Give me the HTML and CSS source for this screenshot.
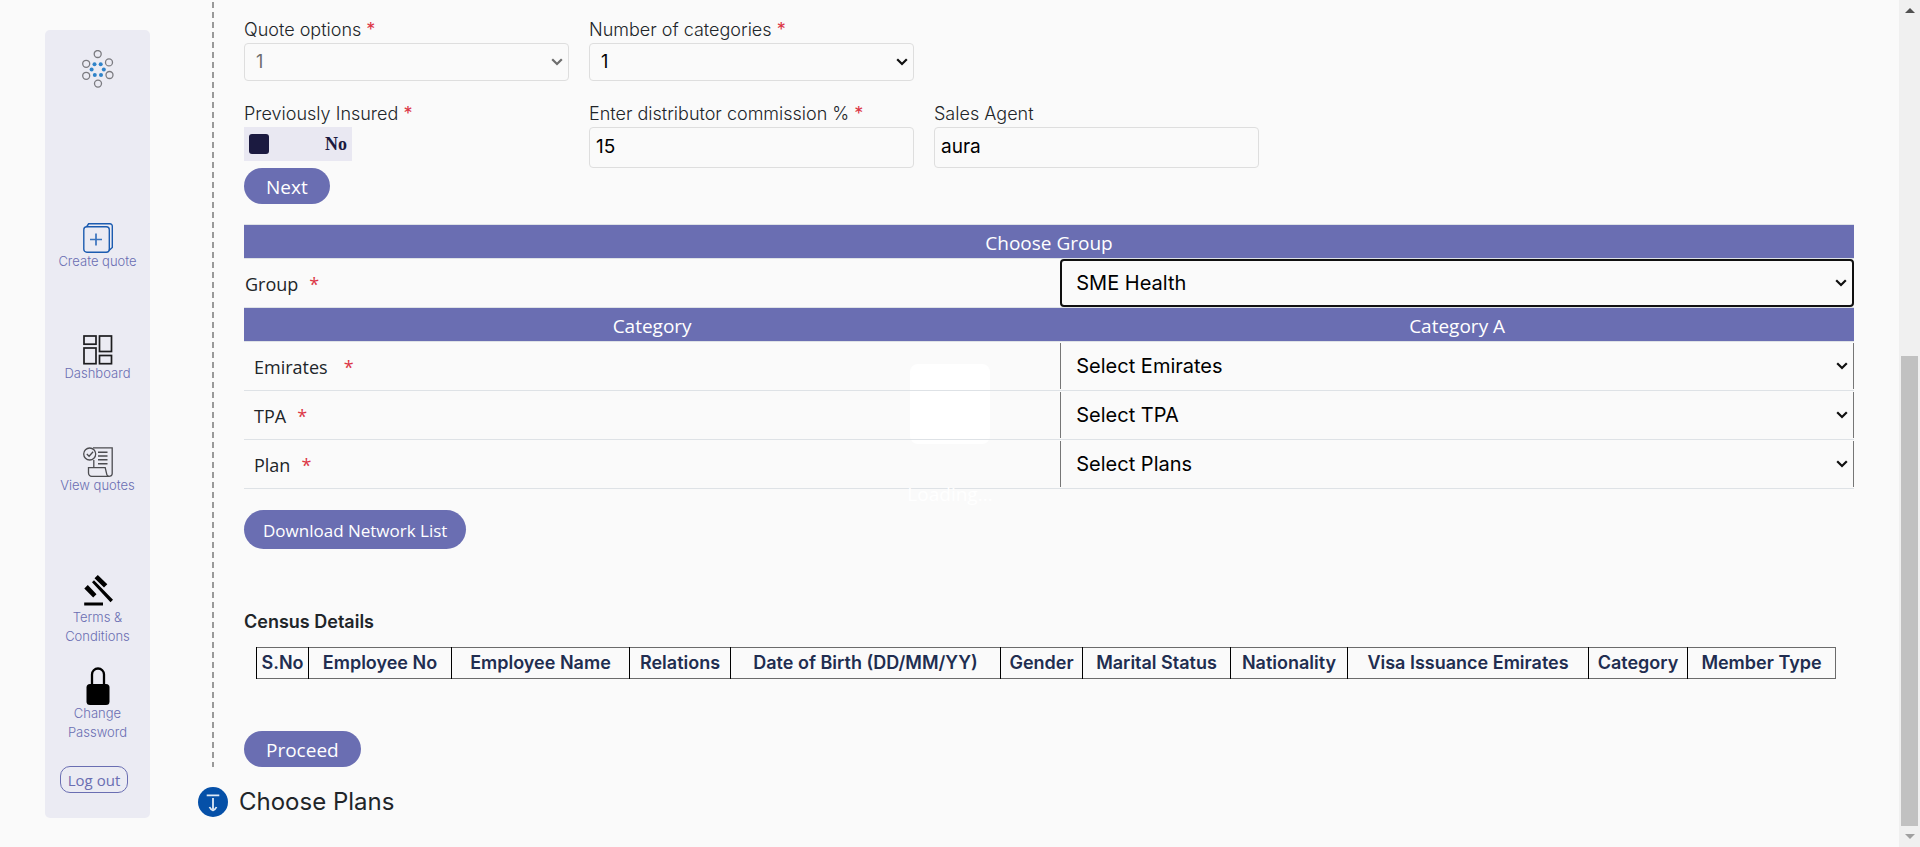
FILE: index.html
```html
<!DOCTYPE html>
<html lang="en">
<head>
<meta charset="utf-8">
<title>Create quote</title>
<link rel="stylesheet" href="styles.css">
</head>
<body>
<div class="app">
  <nav class="sidebar" aria-label="Main">
    <svg class="logo" viewBox="0 0 32 38" width="32" height="38" aria-hidden="true">
      <g fill="none" stroke="#7b7b80" stroke-width="1.3">
        <circle cx="15.7" cy="4" r="3.5"/><circle cx="27" cy="12.4" r="3.5"/><circle cx="27.5" cy="25" r="3.5"/>
        <circle cx="16" cy="33.6" r="3.5"/><circle cx="4.2" cy="25.8" r="3.5"/><circle cx="4.2" cy="13.8" r="3.5"/>
      </g>
      <g fill="#2f83c9">
        <circle cx="12.5" cy="14.3" r="2"/><circle cx="18.7" cy="14.3" r="2"/><circle cx="21.8" cy="19.6" r="2"/>
        <circle cx="19" cy="25" r="2"/><circle cx="12.8" cy="25" r="2"/><circle cx="9.6" cy="19.6" r="2"/>
      </g>
    </svg>
    <a class="nav-item nav-create" href="#">
      <svg viewBox="0 0 30 30" width="30" height="30" aria-hidden="true">
        <g fill="none" stroke="#1c5cb0" stroke-width="1.4">
          <path d="M3.500 4 5.600 .8H27a2.300 2.300 0 0 1 2.300 2.300V24.500L26 27.500"/>
          <rect x=".8" y="3.700" width="25.500" height="25.500" rx="3"/>
        </g>
        <path d="M13 10.500v12M7 16.500h12" stroke="#3a73bd" stroke-width="1.700" fill="none"/>
      </svg>
      <span>Create quote</span>
    </a>
    <a class="nav-item nav-dashboard" href="#">
      <svg viewBox="0 0 30 30" width="30" height="30" aria-hidden="true">
        <g fill="none" stroke="#1d1d1f" stroke-width="1.700">
          <rect x="1" y="1" width="12" height="8.200"/><rect x="16.500" y="1" width="12" height="15.500"/>
          <rect x="1" y="13" width="12" height="15.700"/><rect x="16.500" y="20.500" width="12" height="8.200"/>
        </g>
      </svg>
      <span>Dashboard</span>
    </a>
    <a class="nav-item nav-quotes" href="#">
      <svg viewBox="0 0 30 30" width="30" height="30" aria-hidden="true">
        <g fill="none" stroke="#4c4c50" stroke-width="1.300">
          <path d="M10 .9H29.200V26.500a2.800 2.800 0 0 1-5.400 1L22.200 20.600H5.500V26a3.200 3.200 0 0 0 3.200 3.300H26.500"/>
          <path d="M10.800 13v7.500"/><circle cx="6.700" cy="7" r="6"/><path d="M3.800 7l2.300 2.200 4-4.400"/>
          <path d="M15 5.300h9.500M15 9h9.500M15 12.800h9.500M15 16.700h9.500" stroke-width="1.500"/>
        </g>
      </svg>
      <span>View quotes</span>
    </a>
    <a class="nav-item nav-terms" href="#">
      <svg viewBox="0 0 30 32" width="30" height="32" aria-hidden="true">
        <path d="M1.200 28.500h18.800v3H1.200zM9 8.300l2-2 19 19.500-2.500 2.500zM11.500 4.300 14.800 1 24.300 10.200 21 13.500zM1.300 14.500l3.500-3.500 8.700 9.200-3.300 3.300z"/>
      </svg>
      <span>Terms &amp; Conditions</span>
    </a>
    <a class="nav-item nav-password" href="#">
      <svg viewBox="0 0 24 38" width="24" height="38" aria-hidden="true">
        <path d="M6 18V7.500a6 6 0 0 1 12 0V18" fill="none" stroke="#000" stroke-width="2.300"/>
        <rect x=".5" y="17" width="23" height="21" rx="3.500"/>
      </svg>
      <span>Change Password</span>
    </a>
    <button class="logout" type="button">Log out</button>
  </nav>

  <main class="content">
    <section class="step">
      <form class="quote-form">
        <div class="fields">
          <div class="field">
            <label for="options">Quote options <b class="req">*</b></label>
            <select id="options" disabled><option>1</option></select>
          </div>
          <div class="field">
            <label for="categories">Number of categories <b class="req">*</b></label>
            <select id="categories"><option>1</option></select>
          </div>
        </div>
        <div class="fields">
          <div class="field">
            <label for="insured">Previously Insured <b class="req">*</b></label>
            <div class="toggle"><input type="checkbox" id="insured"><span>No</span></div>
            <button class="pill" type="button">Next</button>
          </div>
          <div class="field">
            <label for="commission">Enter distributor commission % <b class="req">*</b></label>
            <input class="text" id="commission" type="text" value="15">
          </div>
          <div class="field">
            <label for="agent">Sales Agent</label>
            <input class="text" id="agent" type="text" value="aura">
          </div>
        </div>

        <table class="plans">
          <colgroup><col class="names"><col></colgroup>
          <thead><tr><th colspan="2">Choose Group</th></tr></thead>
          <tbody>
            <tr class="group"><td><label for="group">Group</label><b class="req">*</b></td>
              <td><select id="group"><option>SME Health</option></select></td></tr>
            <tr><th>Category</th><th>Category A</th></tr>
            <tr><td><label for="emirates">Emirates</label><b class="req wide">*</b></td>
              <td><select id="emirates"><option>Select Emirates</option></select></td></tr>
            <tr><td><label for="tpa">TPA</label><b class="req">*</b></td>
              <td><select id="tpa"><option>Select TPA</option></select></td></tr>
            <tr><td><label for="plan">Plan</label><b class="req">*</b></td>
              <td><select id="plan"><option>Select Plans</option></select></td></tr>
          </tbody>
        </table>
        <button class="pill download" type="button">Download Network List</button>

        <h2 class="census-title">Census Details</h2>
        <table class="census">
          <colgroup><col class="w52"><col class="w143"><col class="w178"><col class="w101"><col class="w270"><col class="w82"><col class="w148"><col class="w117"><col class="w241"><col class="w99"><col class="w148"></colgroup>
          <thead><tr>
            <th>S.No</th><th>Employee No</th><th>Employee Name</th><th>Relations</th><th>Date of Birth (DD/MM/YY)</th><th>Gender</th><th>Marital Status</th><th>Nationality</th><th>Visa Issuance Emirates</th><th>Category</th><th>Member Type</th>
          </tr></thead>
        </table>
        <button class="pill proceed" type="button">Proceed</button>
      </form>
    </section>
    <div class="next-step">
      <svg viewBox="0 0 30 30" width="30" height="30" aria-hidden="true">
        <circle cx="15" cy="15" r="15" fill="#0550a8"/>
        <path d="M8.700 8.300h12.600M15 11v11M11.500 20c.8 1.800 2 2.900 3.500 3.300 1.500-.4 2.700-1.500 3.500-3.300" fill="none" stroke="#dfe9f6" stroke-width="1.800"/>
      </svg>
      <h2>Choose Plans</h2>
    </div>
  </main>

  <div class="scrollbar" aria-hidden="true">
    <i class="arrow up"></i><i class="track"></i><i class="thumb"></i><i class="arrow down"></i>
  </div>
  <div class="loader" role="status"><i></i><span>Loading...</span></div>
</div>
</body>
</html>
```
FILE: styles.css
```css
* { box-sizing: border-box; }
body {
  margin: 0;
  background: #fafafa;
  color: #212529;
  font: 18px/24px "Open Sans", sans-serif;
}
.app { display: flex; min-height: 100vh; overflow: hidden; }

.sidebar {
  flex: 0 0 105px;
  align-self: flex-start;
  display: flex;
  flex-direction: column;
  align-items: center;
  margin: 30px 0 0 45px;
  padding: 20px 0 25px;
  border-radius: 5px;
  background: #ebebf3;
}
.nav-item {
  display: flex;
  flex-direction: column;
  align-items: center;
  width: 90px;
  color: #6a6eb2;
  font: 300 13px/19px Inter, sans-serif;
  text-align: center;
  text-decoration: none;
}
.nav-item svg { margin-bottom: -1px; }
.nav-create { margin-top: 135px; }
.nav-dashboard, .nav-quotes { margin-top: 64px; }
.nav-terms { margin-top: 79px; }
.nav-terms svg { margin-bottom: 2px; }
.nav-password { margin-top: 21px; }
.logout {
  align-self: flex-start;
  width: 68px;
  height: 27px;
  margin: 24px 0 0 15px;
  padding: 0;
  border: 1px solid #6a6eb2;
  border-radius: 10px;
  background: none;
  color: #6a6eb2;
  font: 15px/24px "Open Sans", sans-serif;
}

.content { flex: 1; min-width: 0; padding: 2px 45px 0 48px; }
.step {
  padding: 16px 0 0 46px;
  background: repeating-linear-gradient(#999 0 6px, transparent 6px 10px) 14px 0 / 2px 100% no-repeat;
}
.fields {
  display: grid;
  grid-template-columns: repeat(auto-fit, 325px);
  gap: 20px;
}
.field { display: flex; flex-direction: column; align-items: flex-start; }
.fields + .fields { margin-top: 21px; }
.field label { height: 25px; font: 300 18px/24px Inter, sans-serif; color: #212529; white-space: nowrap; }
.req { color: #dc3545; font-weight: 400; }
select, .text {
  width: 100%;
  border: 1px solid #dedede;
  border-radius: 4px;
  background: #fafafa;
  color: #000;
  font: 18px/24px Inter, sans-serif;
}
select {
  appearance: none;
  background: #fafafa url("data:image/svg+xml,%3Csvg xmlns='http://www.w3.org/2000/svg' width='12' height='8'%3E%3Cpath d='M1.200 1.200 6 6l4.800-4.800' fill='none' stroke='%23101010' stroke-width='2.200'/%3E%3C/svg%3E") right 5px center no-repeat;
}
.field select { height: 38px; padding: 0 11px; }
select:disabled {
  color: #6d6d6d;
  opacity: 1;
  background-image: url("data:image/svg+xml,%3Csvg xmlns='http://www.w3.org/2000/svg' width='12' height='8'%3E%3Cpath d='M1.200 1.200 6 6l4.800-4.800' fill='none' stroke='%236d6d6d' stroke-width='2.200'/%3E%3C/svg%3E");
}
.text { height: 41px; padding: 0 6px 2px; font-size: 19px; }
.toggle {
  display: flex;
  align-items: center;
  justify-content: space-between;
  width: 108px;
  height: 34px;
  padding: 0 5px;
  background: #e9e8f2;
  color: #1b1a40;
  font: bold 18px/24px "Liberation Serif", serif;
}
.toggle input {
  appearance: none;
  width: 20px;
  height: 20px;
  margin: 0;
  border-radius: 3px;
  background: #1b1a40;
}
.pill {
  display: block;
  height: 36px;
  padding: 2px 22px 0;
  border: 0;
  border-radius: 20px;
  background: #6a6eb2;
  color: #fff;
  font: 19px/34px "Open Sans", sans-serif;
}
.field .pill { margin-top: 7px; }

.plans {
  width: 100%;
  margin-top: 20px;
  border-collapse: collapse;
  table-layout: fixed;
  font-size: 18px;
}
.plans .names { width: 50.7%; }
.plans tr { border-top: 1px solid #dee2e6; border-bottom: 1px solid #dee2e6; }
.plans th {
  height: 34px;
  padding: 2px 0 0;
  background: #6a6eb2;
  color: #fff;
  font-size: 19px;
  font-weight: 400;
}
.plans td { height: 49px; padding: 2px 0 0 10px; }
.plans td + td { padding: 1px 0; }
.plans .group td:first-child { padding-left: 1px; }
.plans .req { margin-left: 11px; }
.plans .wide { margin-left: 16px; }
.plans td select {
  display: block;
  height: 46px;
  padding: 0 15px;
  border: solid #767676;
  border-width: 0 1px;
  border-radius: 0;
  font-size: 20px;
}
.plans .group td + td { padding: 0; }
.plans .group select {
  height: 48px;
  padding: 0 14px;
  border: 2px solid #101010;
  border-radius: 4px;
}
.download { height: 39px; margin-top: 21px; padding: 2px 19px 0; font-size: 17px; }

.census-title { margin: 61px 0 0; font: 600 18px/24px Inter, sans-serif; }
.census {
  width: calc(100% - 34px);
  margin: 13px 22px 0 12px;
  border: 1px solid #6b6b6b;
  border-collapse: collapse;
  table-layout: fixed;
}
.census th {
  height: 31px;
  padding: 0;
  border-left: 1px solid #000;
  color: #212d50;
  font: 600 18px/24px Inter, sans-serif;
  white-space: nowrap;
}
.w52 { width: 52px; } .w143 { width: 143px; } .w178 { width: 178px; }
.w101 { width: 101px; } .w270 { width: 270px; } .w82 { width: 82px; }
.w148 { width: 148px; } .w117 { width: 117px; } .w241 { width: 241px; }
.w99 { width: 99px; }
.proceed { margin-top: 52px; }
.next-step { display: flex; align-items: center; gap: 11px; margin-top: 20px; }
.next-step h2 { margin: 0; font: 24px/30px Inter, sans-serif; }

.scrollbar {
  flex: 0 0 21px;
  display: flex;
  flex-direction: column;
  align-items: center;
  height: 100vh;
  background: #f0f0f0;
}
.track { flex: 335; }
.thumb { flex: 470; width: 17px; background: #c1c1c1; }
.arrow { display: flex; justify-content: center; align-items: center; height: 21px; }
.arrow::before { content: ""; border: 5px solid transparent; }
.up::before { border-top: 0; border-bottom-color: #505050; }
.down::before { border-bottom: 0; border-top-color: #a0a0a0; }

.loader {
  position: absolute;
  top: 364px;
  left: 50%;
  display: flex;
  flex-direction: column;
  align-items: center;
  gap: 38px;
  width: 90px;
  margin-left: -55px;
  color: #fff;
  font-size: 19px;
  pointer-events: none;
}
.loader i { position: relative; z-index: -1; width: 80px; height: 80px; border-radius: 8px; background: #fff; }
```
